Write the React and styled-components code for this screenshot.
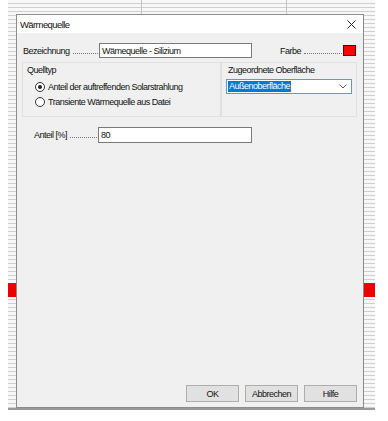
import React from "react";
import styled, { createGlobalStyle } from "styled-components";

const GlobalStyle = createGlobalStyle`
  html, body {
    margin: 0;
    padding: 0;
    background: #ffffff;
  }
  body {
    font-family: "Liberation Sans", Arial, sans-serif;
    font-size: 9px;
    letter-spacing: -0.5px;
    color: #111;
  }
`;

const Screen = styled.div`
  position: relative;
  width: 388px;
  height: 421px;
  overflow: hidden;
  background: #fff;
`;

/* the table of the main window that shows around the dialog */
const Sheet = styled.div`
  margin-left: 8px;
  width: 367px;
  height: 410px;
  padding-top: 283px;
  box-sizing: border-box;
  border-bottom: 2px solid #9a9a9a;
  background:
    linear-gradient(
      to right,
      transparent 133px,
      #c4c4c4 133px,
      #c4c4c4 134px,
      transparent 134px,
      transparent 278px,
      #c4c4c4 278px,
      #c4c4c4 279px,
      transparent 279px
    ),
    repeating-linear-gradient(to bottom, #f8f8f8 0 3px, #cfcfcf 3px 4px);
`;

const RedBand = styled.div`
  height: 14px;
  background: #ec0000;
`;

const Dialog = styled.div`
  position: absolute;
  left: 16px;
  top: 14px;
  width: 348px;
  height: 394px;
  box-sizing: border-box;
  border: 1px solid #8c8c8c;
  background: #f0f0f0;
  box-shadow: 0 2px 0 #9a9a9a;
  display: flex;
  flex-direction: column;
`;

const TitleBar = styled.div`
  height: 18px;
  display: flex;
  align-items: center;
  justify-content: space-between;
  padding-left: 3px;
  background: #fff;
  font-size: 9.5px;
  letter-spacing: -0.6px;
`;

const CloseBtn = styled.div`
  width: 24px;
  height: 18px;
  display: flex;
  align-items: center;
  justify-content: center;
`;

const Body = styled.div`
  flex: 1;
  display: flex;
  flex-direction: column;
  padding: 10px 6px 5px 6px;
`;

const Row = styled.div`
  display: flex;
  align-items: center;
  height: ${(p) => p.h || 15}px;
  margin-top: ${(p) => p.mt || 0}px;
  margin-left: ${(p) => p.ml || 0}px;
`;

const Label = styled.div`
  display: flex;
  align-items: flex-end;
  width: ${(p) => p.w}px;
  margin-left: ${(p) => p.ml || 0}px;
  white-space: nowrap;
`;

const Leader = styled.span`
  flex: 1;
  margin: 0 1px 2px 3px;
  border-bottom: 1px dotted #777;
`;

const TextInput = styled.div`
  width: ${(p) => p.w}px;
  height: 100%;
  box-sizing: border-box;
  border: 1px solid #7a7a7a;
  background: #fff;
  padding: 0 2px;
  display: flex;
  align-items: center;
`;

const Swatch = styled.div`
  width: 13px;
  height: 11px;
  box-sizing: border-box;
  border: 1px solid #5a0000;
  background: #ff0000;
`;

const Groups = styled.div`
  display: flex;
  height: 55px;
  margin: 4px 0 0 -1px;
`;

const Group = styled.div`
  width: ${(p) => p.w}px;
  box-sizing: border-box;
  border: 1px solid #e0e0e0;
  padding: 1px ${(p) => p.px}px 0;
  display: flex;
  flex-direction: column;
`;

const Legend = styled.div`
  height: 12px;
  line-height: 12px;
`;

const RadioRow = styled.label`
  display: flex;
  align-items: center;
  gap: 3px;
  height: 15px;
  margin-left: 8px;
  margin-top: ${(p) => p.mt || 0}px;
`;

const RadioDot = styled.span`
  width: 10px;
  height: 10px;
  box-sizing: border-box;
  border: 1px solid #333;
  border-radius: 50%;
  background: #fff;
  display: flex;
  align-items: center;
  justify-content: center;

  &::after {
    content: "";
    width: 4px;
    height: 4px;
    border-radius: 50%;
    background: ${(p) => (p.checked ? "#222" : "transparent")};
  }
`;

const Combo = styled.div`
  margin: 3px 0 0 -2px;
  width: 126px;
  height: 15px;
  box-sizing: border-box;
  border: 1px solid #5a9bd5;
  background: #fff;
  display: flex;
  align-items: center;
  justify-content: space-between;
  padding: 0 4px 0 1px;
`;

const Selected = styled.span`
  background: #0078d7;
  color: #fff;
  padding: 0 1px;
  line-height: 11px;
`;

const Footer = styled.div`
  margin-top: auto;
  display: flex;
  justify-content: flex-end;
  gap: 6px;
`;

const Button = styled.div`
  width: 53px;
  height: 17px;
  box-sizing: border-box;
  border: 1px solid #adadad;
  background: #e1e1e1;
  display: flex;
  align-items: center;
  justify-content: center;
`;

const App = () => {
  return (
    <>
      <GlobalStyle />
      <Screen>
        <Sheet>
          <RedBand />
        </Sheet>
        <Dialog>
          <TitleBar>
            <span>Wärmequelle</span>
            <CloseBtn>
              <svg width="9" height="9" viewBox="0 0 9 9">
                <path d="M0.5 0.5L8.5 8.5M8.5 0.5L0.5 8.5" stroke="#222" strokeWidth="1" />
              </svg>
            </CloseBtn>
          </TitleBar>
          <Body>
            <Row>
              <Label w={76}>
                Bezeichnung <Leader />
              </Label>
              <TextInput w={153}>Wämequelle - Silizium</TextInput>
              <Label w={63} ml={28}>
                Farbe <Leader />
              </Label>
              <Swatch />
            </Row>
            <Groups>
              <Group w={202} px={4}>
                <Legend>Quelltyp</Legend>
                <RadioRow mt={3}>
                  <RadioDot checked />
                  Anteil der auftreffenden Solarstrahlung
                </RadioRow>
                <RadioRow>
                  <RadioDot />
                  Transiente Wärmequelle aus Datei
                </RadioRow>
              </Group>
              <Group w={136} px={6}>
                <Legend>Zugeordnete Oberfläche</Legend>
                <Combo>
                  <Selected>Außenoberfläche</Selected>
                  <svg width="8" height="5" viewBox="0 0 8 5">
                    <path d="M0.5 0.5L4 4L7.5 0.5" stroke="#555" fill="none" strokeWidth="1" />
                  </svg>
                </Combo>
              </Group>
            </Groups>
            <Row h={16} mt={10} ml={11}>
              <Label w={64}>
                Anteil [%] <Leader />
              </Label>
              <TextInput w={154}>80</TextInput>
            </Row>
            <Footer>
              <Button>OK</Button>
              <Button>Abbrechen</Button>
              <Button>Hilfe</Button>
            </Footer>
          </Body>
        </Dialog>
      </Screen>
    </>
  );
};

export default App;
